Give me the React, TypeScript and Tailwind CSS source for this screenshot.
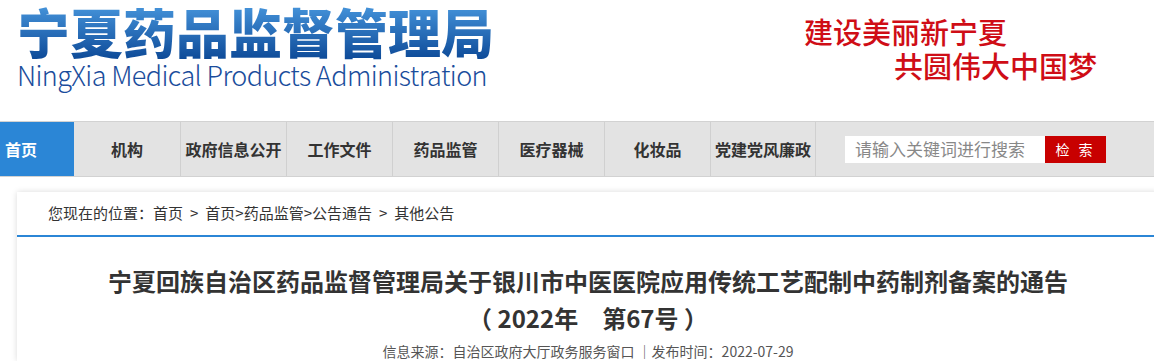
const navItems = ["机构", "政府信息公开", "工作文件", "药品监管", "医疗器械", "化妆品", "党建党风廉政"];

const cjk = { fontFamily: '"Noto Sans CJK SC", "Noto Sans", sans-serif' };

export default function App() {
  return (
    <div className="w-[1154px] h-[361px] overflow-hidden bg-white" style={cjk}>
      {/* header */}
      <div className="flex h-[121px]">
        <div className="pl-[17px] pt-[1px]">
          <h1 className="text-[53px] leading-[60px] font-black bg-gradient-to-b from-[#4a9ae0] to-[#0b4896] bg-clip-text text-transparent">
            宁夏药品监督管理局
          </h1>
          <p
            className="text-[27px] leading-[28px] text-[#1a4d9c] tracking-[-0.6px]"
            style={{ fontWeight: 300 }}
          >
            NingXia Medical Products Administration
          </p>
        </div>
        <div className="ml-auto mr-[57px] pt-[14px] text-[29px] leading-[34px] text-[#cf0d16] font-medium">
          <p className="pr-[90px]">建设美丽新宁夏</p>
          <p className="pl-[90px]">共圆伟大中国梦</p>
        </div>
      </div>

      {/* nav */}
      <div className="flex h-[56px] bg-[#e3e3e3] border-y border-[#d2d2d2]">
        <div className="w-[74px] bg-[#2b86d6] text-white text-[16px] font-bold flex items-center pl-[5px]">
          首页
        </div>
        {navItems.map((item, i) => (
          <div
            key={item}
            className={`w-[106px] flex items-center justify-center text-[16px] font-bold text-[#333] ${
              i > 0 ? "border-l border-[#d0d0d0]" : ""
            } ${i === navItems.length - 1 ? "border-r border-[#d0d0d0]" : ""}`}
          >
            {item}
          </div>
        ))}
        <div className="flex items-center ml-[29px]">
          <div className="w-[200px] h-[27px] bg-white flex items-center pl-[10px] text-[17px] text-[#888]">
            请输入关键词进行搜索
          </div>
          <div className="w-[61px] h-[27px] bg-[#c80000] text-white text-[14px] flex items-center justify-center tracking-[3px]">
            检 索
          </div>
        </div>
      </div>

      {/* content card */}
      <div className="mt-[15px] ml-[17px] w-[1142px] bg-white shadow-[0_0_6px_rgba(0,0,0,0.15)]">
        <div className="h-[45px] flex items-center pl-[31px] text-[15px] text-[#333] border-b-2 border-[#2b86d6]">
          您现在的位置：首页<span className="mx-[7px]">&gt;</span>首页&gt;药品监管&gt;公告通告
          <span className="mx-[7px]">&gt;</span>其他公告
        </div>
        <div className="pt-[25px] text-center">
          <h2 className="text-[24px] leading-[37px] font-bold text-[#333]">
            宁夏回族自治区药品监督管理局关于银川市中医医院应用传统工艺配制中药制剂备案的通告
            <br />（ 2022年　第67号 ）
          </h2>
          <p className="mt-[5px] text-[14px] leading-[20px] text-[#555]">
            信息来源：自治区政府大厅政务服务窗口 ｜发布时间：2022-07-29
          </p>
        </div>
      </div>
    </div>
  );
}
